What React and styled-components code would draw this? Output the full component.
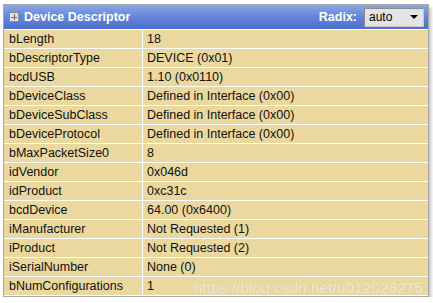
import React from "react";
import styled, { createGlobalStyle } from "styled-components";

const GlobalStyle = createGlobalStyle`
  html, body {
    margin: 0;
    padding: 0;
    background: #ffffff;
  }
  body {
    font-family: "Liberation Sans", Arial, sans-serif;
  }
`;

const Page = styled.div`
  padding: 4px 0 0 3px;
`;

const Panel = styled.div`
  position: relative;
  width: 424px;
  border: 1px solid #a9a9a9;
  box-shadow: 2px 3px 3px rgba(0, 0, 0, 0.25);
  background: #ebd89f;
`;

const TitleBar = styled.div`
  display: flex;
  align-items: center;
  height: 24px;
  padding: 0 4px 0 5px;
  background: linear-gradient(to bottom, #88a8e6 0%, #6485d8 50%, #4d6fcb 100%);
  border-bottom: 1px solid #ffffff;
`;

const ExpandBox = styled.span`
  position: relative;
  width: 8px;
  height: 8px;
  margin-right: 5px;
  border: 1px solid #8a8a8a;
  background: #e2e2e2;

  &::before,
  &::after {
    content: "";
    position: absolute;
    background: #6a6a6a;
  }
  &::before {
    left: 1px;
    right: 1px;
    top: 3.5px;
    height: 1px;
  }
  &::after {
    top: 1px;
    bottom: 1px;
    left: 3.5px;
    width: 1px;
  }
`;

const Title = styled.span`
  flex: 1;
  color: #ffffff;
  font-size: 12.5px;
  font-weight: bold;
`;

const RadixLabel = styled.span`
  color: #ffffff;
  font-size: 12.5px;
  font-weight: bold;
  margin-right: 7px;
`;

const Select = styled.div`
  display: flex;
  align-items: center;
  justify-content: space-between;
  box-sizing: border-box;
  width: 60px;
  height: 19px;
  padding: 0 5px 0 4px;
  background: #e4e4e4;
  border: 1px solid #8c8c8c;
  border-right-color: #c8c8c8;
  border-bottom-color: #c8c8c8;
  font-size: 12px;
  color: #000;
`;

const Arrow = styled.span`
  width: 0;
  height: 0;
  border-left: 4px solid transparent;
  border-right: 4px solid transparent;
  border-top: 4px solid #000;
`;

const Row = styled.div`
  display: grid;
  grid-template-columns: 139px 1fr;
  height: 18px;
  border-bottom: 1px solid #ffffff;

  &:last-child {
    border-bottom: none;
  }
`;

const Cell = styled.div`
  display: flex;
  align-items: center;
  padding-left: ${(p) => (p.$value ? "4px" : "5px")};
  font-size: 12.5px;
  color: #111;
  white-space: nowrap;
  border-right: ${(p) => (p.$value ? "none" : "1px solid #ffffff")};
`;

const Watermark = styled.div`
  position: absolute;
  right: 5px;
  bottom: -1px;
  font-size: 15.5px;
  color: rgba(255, 255, 255, 0.62);
  text-shadow: 0 0 1px rgba(150, 150, 150, 0.35);
  pointer-events: none;
  white-space: nowrap;
`;

const fields = [
  ["bLength", "18"],
  ["bDescriptorType", "DEVICE (0x01)"],
  ["bcdUSB", "1.10 (0x0110)"],
  ["bDeviceClass", "Defined in Interface (0x00)"],
  ["bDeviceSubClass", "Defined in Interface (0x00)"],
  ["bDeviceProtocol", "Defined in Interface (0x00)"],
  ["bMaxPacketSize0", "8"],
  ["idVendor", "0x046d"],
  ["idProduct", "0xc31c"],
  ["bcdDevice", "64.00 (0x6400)"],
  ["iManufacturer", "Not Requested (1)"],
  ["iProduct", "Not Requested (2)"],
  ["iSerialNumber", "None (0)"],
  ["bNumConfigurations", "1"],
];

const App = () => {
  return (
    <>
      <GlobalStyle />
      <Page>
        <Panel>
          <TitleBar>
            <ExpandBox />
            <Title>Device Descriptor</Title>
            <RadixLabel>Radix:</RadixLabel>
            <Select>
              <span>auto</span>
              <Arrow />
            </Select>
          </TitleBar>
          {fields.map(([name, value]) => (
            <Row key={name}>
              <Cell>{name}</Cell>
              <Cell $value>{value}</Cell>
            </Row>
          ))}
          <Watermark>https://blog.csdn.net/u012028275</Watermark>
        </Panel>
      </Page>
    </>
  );
};

export default App;
